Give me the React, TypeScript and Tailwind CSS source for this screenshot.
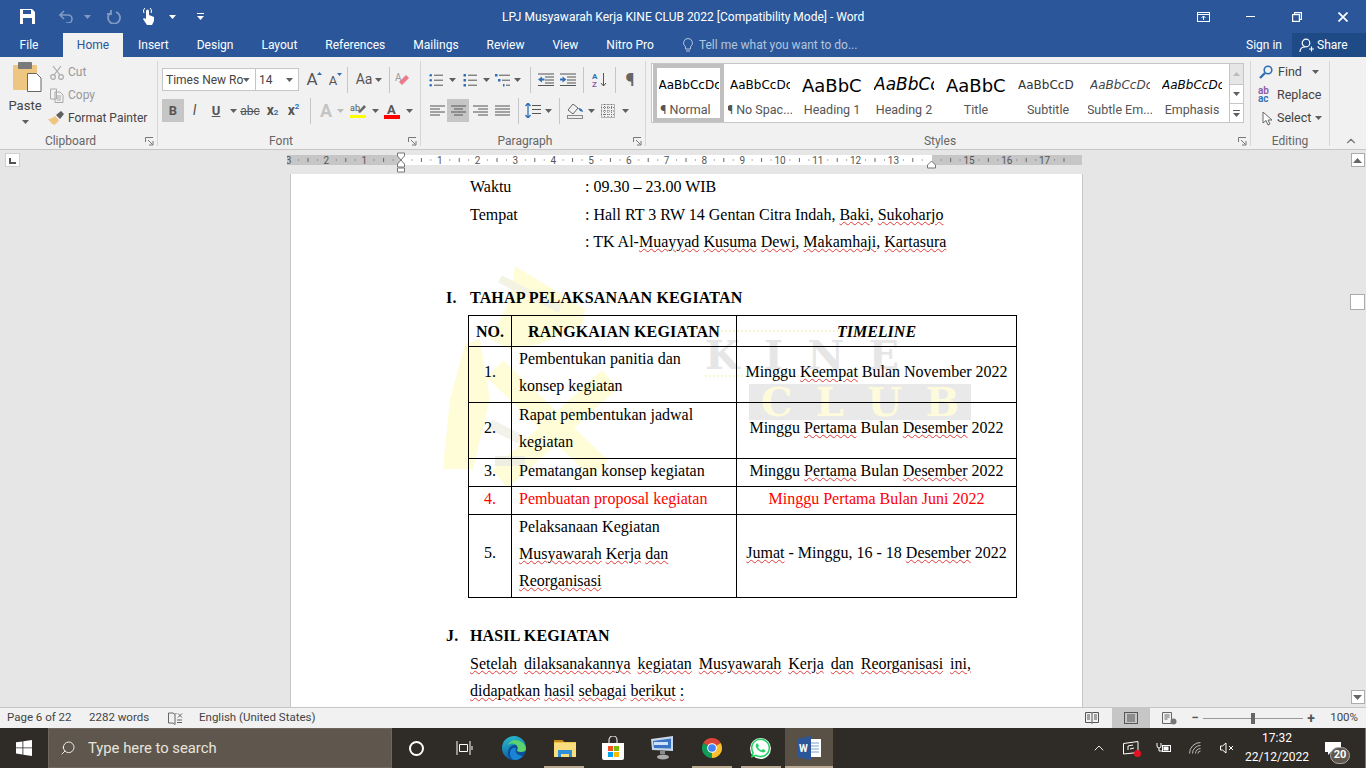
import React from 'react';
import { FaWhatsapp } from 'react-icons/fa';
import { ChevronUp, Search } from 'lucide-react';

const ui = { fontFamily: 'Roboto, "Open Sans", sans-serif' };
const serif = { fontFamily: '"Liberation Serif", "Times New Roman", serif' };
const sample = { fontFamily: '"DejaVu Sans", sans-serif' };
const markFont = { fontFamily: '"DejaVu Serif", serif' };

const Caret: React.FC<{ color?: string }> = ({ color = '#5f5f5f' }) => (
  <svg width="7" height="4" viewBox="0 0 7 4"><path d="M0 0h7L3.5 4z" fill={color} /></svg>
);

const Sep = () => <div className="w-px h-[26px] bg-[#c6c6c6] shrink-0" />;

const Launcher = () => (
  <svg width="9" height="9" viewBox="0 0 9 9" fill="none" stroke="#777">
    <path d="M.5 5V.5H8" /><path d="M3 3l4.5 4.5M8 4v4H4" />
  </svg>
);

// little bars used for list/align icons
const Lines: React.FC<{ rows: [number, number][]; w?: number; h?: number }> = ({ rows, w = 15, h = 12 }) => (
  <svg width={w} height={h} viewBox={`0 0 ${w} ${h}`}>
    {rows.map(([x, l], i) => (
      <rect key={i} x={x} y={i * (h / rows.length) + 0.5} width={l} height="1" fill="#555" />
    ))}
  </svg>
);

const Bullets: React.FC<{ numbered?: boolean }> = ({ numbered }) => (
  <svg width="14" height="14" viewBox="0 0 14 14">
    {[1, 6, 11].map((y) => (
      <React.Fragment key={y}>
        <rect x="0.5" y={y} width="2.5" height="2.5" rx={numbered ? 0.3 : 1.2} fill="#2f6fb5" />
        <rect x="5" y={y + 0.7} width="9" height="1" fill="#555" />
      </React.Fragment>
    ))}
  </svg>
);

const Multi = () => (
  <svg width="15" height="14" viewBox="0 0 15 14">
    <rect x="0" y="1" width="2.5" height="2.5" fill="#2f6fb5" /><rect x="4" y="1.7" width="11" height="1" fill="#555" />
    <rect x="3" y="6" width="2.5" height="2.5" fill="#2f6fb5" /><rect x="7" y="6.7" width="8" height="1" fill="#555" />
    <rect x="8" y="11" width="1.5" height="2.5" fill="#2f6fb5" /><rect x="11" y="11.7" width="4" height="1" fill="#555" />
  </svg>
);

const Indent: React.FC<{ out?: boolean }> = ({ out }) => (
  <svg width="16" height="13" viewBox="0 0 16 13">
    {[0.5, 3.5, 6.5, 9.5, 12].map((y, i) => (
      <rect key={y} x={i === 0 || i === 4 ? 0 : 7} y={y} width={i === 0 || i === 4 ? 16 : 9} height="1" fill="#555" />
    ))}
    <path d={out ? 'M0 6.5 4 3.5v2h2.5v2H4v2z' : 'M6.5 6.5 2.5 3.5v2H0v2h2.5v2z'} fill="#2f6fb5" />
  </svg>
);

const Slot: React.FC<{ className: string; children?: React.ReactNode }> = ({ className, children }) => (
  <div className={`flex items-center justify-center shrink-0 h-full ${className}`}>{children}</div>
);

const GroupLabel: React.FC<{ children: React.ReactNode; launcher?: boolean }> = ({ children, launcher }) => (
  <div className={`relative h-[14px] pt-[4px] flex items-center justify-center text-[#666] text-[12px] ${launcher ? 'pr-[16px]' : ''}`}>
    {children}
    {launcher && (
      <span className="absolute right-[3px] top-[5px] flex"><Launcher /></span>
    )}
  </div>
);

const StyleItem: React.FC<{
  sampleText: string; label: string; sampleClass: string; selected?: boolean;
}> = ({ sampleText, label, sampleClass, selected }) => (
  <div className={`shrink-0 h-full flex flex-col items-center overflow-hidden border-[4px] ${selected ? 'border-[#c0c0c0] w-[71px]' : 'border-transparent w-[72px]'}`}>
    <div className={`h-[34px] w-[60px] shrink-0 overflow-hidden whitespace-nowrap flex items-center ${sampleClass}`} style={sample}>{sampleText}</div>
    <div className={`text-[12.5px] text-[#555] whitespace-nowrap leading-[16px] ${selected ? 'pr-[6px]' : ''}`}>{label}</div>
  </div>
);

const Clipboard = () => (
  <div className="w-[158px] shrink-0 flex flex-col border-r border-[#d6d6d6] mt-[4px] h-[85px]">
    <div className="flex h-[71px] text-[12px] text-[#444]">
      <div className="w-[50px] flex flex-col items-center pt-[1px]">
        <svg width="30" height="30" viewBox="0 0 30 30" className="ml-[4px] shrink-0">
          <rect x="1" y="3" width="24" height="25" rx="1" fill="#eec681" />
          <rect x="6" y="0" width="14" height="7" rx="1" fill="#7a7a7a" />
          <path d="M15.5 11.500h9l4.500 4.500v13.500H15.500z" fill="#fff" stroke="#666" />
        </svg>
        <div className="leading-[16px] mt-[6px] text-[13px]">Paste</div>
        <div className="mt-[6px]"><Caret /></div>
      </div>
      <div className="flex flex-col gap-[3px] pt-[1px]">
        <div className="flex items-center gap-[4px] h-[20px] text-[#999]">
          <svg width="14" height="15" viewBox="0 0 14 15" fill="none" stroke="#aaa" strokeWidth="1.2"><circle cx="3" cy="12" r="2.3" /><circle cx="11" cy="12" r="2.3" /><path d="M4 10 11 1M10 10 3 1" /></svg>
          <span>Cut</span>
        </div>
        <div className="flex items-center gap-[4px] h-[20px] text-[#999]">
          <svg width="14" height="15" viewBox="0 0 14 15" fill="none" stroke="#aaa"><path d="M.5 1h6v10h-6zM5 4h5l3 3v7.5H5zM7 8h4M7 10h4M7 12h4" /></svg>
          <span>Copy</span>
        </div>
        <div className="flex items-center gap-[4px] h-[20px] -ml-[2px]">
          <svg width="16" height="14" viewBox="0 0 16 14"><path d="M0 8c4 0 5-2 7-3l4 4c-1 2-3 4-5 5-2-1-4-3-6-6z" fill="#eec681" /><path d="M8 4l5-4 3 3-4 5z" fill="#5f5f5f" /></svg>
          <span className="whitespace-nowrap">Format Painter</span>
        </div>
      </div>
    </div>
    <GroupLabel launcher>Clipboard</GroupLabel>
  </div>
);

const FontGroup = () => (
  <div className="w-[263px] shrink-0 flex flex-col border-r border-[#d6d6d6] mt-[4px] h-[85px]">
    <div className="h-[71px] flex flex-col pl-[4px] pt-[7px]">
      <div className="h-[23px] flex items-center">
        <div className="w-[94px] h-[23px] bg-white border border-[#c6c6c6] flex items-center justify-between pl-[3px] pr-[5px] text-[12px] text-[#444] shrink-0">
          <span className="whitespace-nowrap">Times New Ro</span><Caret />
        </div>
        <div className="w-[43px] h-[23px] bg-white border border-l-0 border-[#c6c6c6] flex items-center justify-between pl-[3px] pr-[5px] text-[12px] text-[#444] shrink-0">
          <span>14</span><Caret />
        </div>
        <Slot className="w-[20px] ml-[3px] relative text-[17px] text-[#555]">A<span className="absolute right-[0px] top-[4px] flex"><svg width="5" height="3"><path d="M0 3h5L2.5 0z" fill="#2f6fb5" /></svg></span></Slot>
        <Slot className="w-[22px] relative text-[13px] text-[#555] pt-[2px]">A<span className="absolute right-[2px] top-[5px] flex"><svg width="5" height="3"><path d="M0 0h5L2.5 3z" fill="#2f6fb5" /></svg></span></Slot>
        <Slot className="w-[7px]"><Sep /></Slot>
        <Slot className="w-[36px] gap-[3px] text-[14px] text-[#555]">Aa<Caret /></Slot>
        <Slot className="w-[5px]"><Sep /></Slot>
        <Slot className="w-[22px]">
          <svg width="16" height="15" viewBox="0 0 16 15"><path d="M7 13 14 6l-3-3-7 7z" fill="#ec7a8c" /><text x="0" y="9" fontSize="10" fill="#999" style={ui}>A</text></svg>
        </Slot>
      </div>
      <div className="h-[23px] flex items-center mt-[8px] text-[#555]">
        <Slot className="w-[22px] bg-[#c6c6c6] font-bold text-[13px]">B</Slot>
        <Slot className="w-[21px] italic text-[14px]" >I</Slot>
        <Slot className="w-[22px] underline font-bold text-[13px]">U</Slot>
        <Slot className="w-[12px]"><Caret /></Slot>
        <Slot className="w-[22px] line-through text-[12px]">abc</Slot>
        <Slot className="w-[23px] font-bold text-[14px]">x<sub className="text-[8px] text-[#2f6fb5]">2</sub></Slot>
        <Slot className="w-[19px] font-bold text-[14px]">x<sup className="text-[8px] text-[#2f6fb5]">2</sup></Slot>
        <Slot className="w-[14px]"><Sep /></Slot>
        <Slot className="w-[18px] text-[#c4c4c4] text-[18px] font-bold">A</Slot>
        <Slot className="w-[10px]"><Caret color="#bbb" /></Slot>
        <Slot className="w-[26px]">
          <svg width="17" height="15" viewBox="0 0 17 15"><text x="0" y="8" fontSize="9" fill="#555" style={ui}>ab</text><path d="M8 9 14 2l2 2-6 6z" fill="#666" /><rect y="12" width="16" height="3" fill="#ff0" /></svg>
        </Slot>
        <Slot className="w-[9px]"><Caret /></Slot>
        <Slot className="w-[25px]">
          <svg width="17" height="16" viewBox="0 0 17 16"><text x="3" y="11" fontSize="13" fontWeight="700" fill="#555" style={ui}>A</text><rect y="12" width="16" height="4" fill="#f00" /></svg>
        </Slot>
        <Slot className="w-[9px]"><Caret /></Slot>
      </div>
    </div>
    <GroupLabel launcher>Font</GroupLabel>
  </div>
);

const ParagraphGroup = () => (
  <div className="w-[225px] shrink-0 flex flex-col border-r border-[#d6d6d6] mt-[4px] h-[85px]">
    <div className="h-[71px] flex flex-col pl-[7px] pt-[7px]">
      <div className="h-[23px] flex items-center">
        <Slot className="w-[15px]"><Bullets /></Slot>
        <Slot className="w-[18px]"><Caret /></Slot>
        <Slot className="w-[17px]"><Bullets numbered /></Slot>
        <Slot className="w-[16px]"><Caret /></Slot>
        <Slot className="w-[17px]"><Multi /></Slot>
        <Slot className="w-[13px]"><Caret /></Slot>
        <Slot className="w-[12px]"><Sep /></Slot>
        <Slot className="w-[20px]"><Indent out /></Slot>
        <Slot className="w-[23px]"><Indent /></Slot>
        <Slot className="w-[8px]"><Sep /></Slot>
        <Slot className="w-[24px]">
          <svg width="17" height="16" viewBox="0 0 17 16"><text x="1" y="7" fontSize="8" fontWeight="700" fill="#2f6fb5" style={ui}>A</text><text x="1" y="15" fontSize="8" fontWeight="700" fill="#8a5aa8" style={ui}>Z</text><path d="M12.5 1v13M10 11l2.5 3 2.5-3" stroke="#555" fill="none" /></svg>
        </Slot>
        <Slot className="w-[8px]"><Sep /></Slot>
        <Slot className="w-[22px] text-[18px] font-bold text-[#666]">¶</Slot>
      </div>
      <div className="h-[23px] flex items-center mt-[8px]">
        <Slot className="w-[19px]"><Lines rows={[[0, 15], [0, 10], [0, 15], [0, 10]]} /></Slot>
        <Slot className="w-[22px] bg-[#c6c6c6]"><Lines rows={[[0, 15], [3, 9], [0, 15], [3, 9]]} /></Slot>
        <Slot className="w-[22px]"><Lines rows={[[0, 15], [5, 10], [0, 15], [5, 10]]} /></Slot>
        <Slot className="w-[22px]"><Lines rows={[[0, 15], [0, 15], [0, 15], [0, 15]]} /></Slot>
        <Slot className="w-[10px]"><Sep /></Slot>
        <Slot className="w-[19px]">
          <svg width="16" height="15" viewBox="0 0 16 15"><path d="M3 0v15M0.5 3 3 0l2.5 3M.5 12 3 15l2.5-3" stroke="#2f6fb5" fill="none" strokeWidth="1.3" /><rect x="7" y="2" width="9" height="1" fill="#555" /><rect x="7" y="6" width="9" height="1" fill="#555" /><rect x="7" y="10" width="9" height="1" fill="#555" /></svg>
        </Slot>
        <Slot className="w-[12px]"><Caret /></Slot>
        <Slot className="w-[10px]"><Sep /></Slot>
        <Slot className="w-[22px]">
          <svg width="17" height="16" viewBox="0 0 17 16" fill="none"><path d="M6 1 1 7l5 4 5-6z" stroke="#666" /><path d="M11 5c3 0 5 2 5 4l-3-1z" fill="#2f6fb5" /><rect x="0.5" y="12.5" width="15" height="3" stroke="#888" fill="#eee" /></svg>
        </Slot>
        <Slot className="w-[10px]"><Caret /></Slot>
        <Slot className="w-[24px]">
          <svg width="14" height="14" viewBox="0 0 14 14" fill="none" stroke="#777" strokeDasharray="1 1"><rect x="0.5" y="0.5" width="13" height="13" /><path d="M7 0v14M0 7h14M3.5 0v14M10.5 0v14M0 3.5h14M0 10.5h14" /></svg>
        </Slot>
        <Slot className="w-[10px]"><Caret /></Slot>
      </div>
    </div>
    <GroupLabel launcher>Paragraph</GroupLabel>
  </div>
);

const StylesGroup = () => (
  <div className="w-[605px] shrink-0 flex flex-col border-r border-[#d6d6d6] mt-[4px] h-[85px]">
    <div className="h-[71px] pl-[5px] pt-[2px]">
      <div className="w-[593px] h-[60px] border border-[#c6c6c6] bg-white flex pl-[1px]">
        <StyleItem selected sampleText="AaBbCcDc" label="¶ Normal" sampleClass="text-[12px] text-black" />
        <StyleItem sampleText="AaBbCcDc" label="¶ No Spac..." sampleClass="text-[12px] text-black" />
        <StyleItem sampleText="AaBbC" label="Heading 1" sampleClass="text-[18px] text-black" />
        <StyleItem sampleText="AaBbCc" label="Heading 2" sampleClass="text-[17px] text-black italic" />
        <StyleItem sampleText="AaBbC" label="Title" sampleClass="text-[18px] text-black" />
        <StyleItem sampleText="AaBbCcD" label="Subtitle" sampleClass="text-[12px] text-[#333]" />
        <StyleItem sampleText="AaBbCcDc" label="Subtle Em..." sampleClass="text-[12px] text-[#444] italic" />
        <StyleItem sampleText="AaBbCcDc" label="Emphasis" sampleClass="text-[12px] text-black italic" />
        <div className="ml-auto w-[14px] border-l border-[#c6c6c6] flex flex-col shrink-0">
          <div className="h-[21px] bg-[#e6e6e6] border-b border-[#c6c6c6] flex items-center justify-center">
            <svg width="7" height="4"><path d="M0 4h7L3.5 0z" fill="#bbb" /></svg>
          </div>
          <div className="h-[19px] border-b border-[#c6c6c6] flex items-center justify-center"><Caret /></div>
          <div className="flex-1 flex flex-col items-center justify-center gap-[2px]">
            <div className="w-[7px] h-px bg-[#5f5f5f]" /><Caret />
          </div>
        </div>
      </div>
    </div>
    <GroupLabel launcher>Styles</GroupLabel>
  </div>
);

const EditingGroup = () => (
  <div className="w-[79px] shrink-0 flex flex-col border-r border-[#d6d6d6] mt-[4px] h-[85px]">
    <div className="h-[71px] flex flex-col gap-[3px] pl-[8px] pt-[1px] text-[12.5px] text-[#444]">
      <div className="h-[20px] flex items-center gap-[5px]">
        <svg width="14" height="14" viewBox="0 0 14 14" fill="none" stroke="#2f6fb5" strokeWidth="1.6"><circle cx="9" cy="5" r="3.8" /><path d="M6 8 1 13" strokeWidth="2.4" /></svg>
        <span>Find</span><span className="ml-[5px] flex"><Caret /></span>
      </div>
      <div className="h-[20px] flex items-center gap-[3px] -ml-[1px]">
        <div className="w-[16px] text-[10px] leading-[8px] font-semibold">
          <div className="text-[#8a5aa8]">ab</div><div className="text-[#2f6fb5]">ac</div>
        </div>
        <span>Replace</span>
      </div>
      <div className="h-[20px] flex items-center gap-[4px] pl-[3px]">
        <svg width="11" height="15" viewBox="0 0 11 15" fill="#fff" stroke="#666"><path d="M1 1v11l3-2.5L6 14l2-1-2-4h4z" /></svg>
        <span>Select</span><Caret />
      </div>
    </div>
    <GroupLabel>Editing</GroupLabel>
  </div>
);

const Ribbon = () => (
  <div className="h-[93px] bg-[#f1f1f1] border-b border-[#c6c6c6] flex shrink-0 relative">
    <Clipboard />
    <FontGroup />
    <ParagraphGroup />
    <StylesGroup />
    <EditingGroup />
    <span className="absolute right-[8px] bottom-[1px] flex text-[#777]"><ChevronUp size={14} /></span>
  </div>
);

const ticks = Array.from({ length: 85 }, (_, i) => i - 14);
const Ruler = () => (
  <svg width="800" height="24" viewBox="0 0 800 24" className="shrink-0">
    <rect x="0" y="5" width="795" height="10" fill="#c6c6c6" />
    <rect x="114" y="5" width="531" height="10" fill="#fff" />
    {ticks.map((t) => {
      const x = 115 + t * 9.45;
      if (x > 790) return null;
      const q = ((t % 4) + 4) % 4;
      if (q === 0) {
        const n = Math.abs(t / 4);
        if (n === 0 || n === 14) return null;
        return <text key={t} x={x} y="13.5" textAnchor="middle" fontSize="10" fill="#555" style={ui}>{n}</text>;
      }
      return q === 2
        ? <rect key={t} x={x} y="8" width="1" height="4" fill="#666" />
        : <rect key={t} x={x} y="9.5" width="1" height="1" fill="#666" />;
    })}
    <path d="M110.5 3h7v3l-3.5 4-3.5-4zM110.5 17v-3l3.5-4 3.5 4v3zM110.5 18h7v4h-7z" fill="#fff" stroke="#777" />
    <path d="M640.5 18v-3l4-4 4 4v3z" fill="#fff" stroke="#777" />
  </svg>
);

const Sq: React.FC<{ children: React.ReactNode }> = ({ children }) => (
  <span className="underline decoration-wavy decoration-[#e23b3b] decoration-1 underline-offset-1">{children}</span>
);

const Watermark = () => (
  <div className="absolute left-[152px] top-[90px] w-[540px] h-[225px] pointer-events-none overflow-hidden">
    <svg width="220" height="225" viewBox="443 265 220 225" className="absolute left-0 top-0">
      <path d="M465 345 480 340 490 400 473 470H443L450 400z" fill="#fffdd8" />
      <path d="M515 267 585 310 583 325 540 345 510 350 490 340 510 300z" fill="#fffdd8" />
      <path d="M495 370 600 470M610 380 500 480" stroke="#fffdd8" strokeWidth="24" fill="none" />
      <path d="M500 280 560 310" stroke="#f4f2e2" strokeWidth="8" fill="none" />
      <path d="M490 425 520 440" stroke="#f2f2ea" strokeWidth="10" fill="none" />
      <path d="M495 462h30" stroke="#efeee2" strokeWidth="10" fill="none" />
    </svg>
    <div className="absolute left-[262px] top-[66px] w-[194px] h-[3px] border-t-2 border-dotted border-[#faf6d0]" />
    <div className="absolute left-[262px] top-[72px] w-[194px] flex justify-between text-[40px] leading-[38px] font-bold text-[#e6e6e6]" style={markFont}>
      <span>K</span><span>I</span><span>N</span><span>E</span>
    </div>
    <div className="absolute left-[262px] top-[111px] w-[194px] h-[3px] border-t-2 border-dotted border-[#faf6d0]" />
    <div className="absolute left-[306px] top-[120px] w-[222px] h-[36px] bg-[#e9e9e9] text-[#fdfbdc] text-[40px] leading-[36px] font-bold flex justify-around overflow-hidden" style={markFont}>
      <span>C</span><span>L</span><span>U</span><span>B</span>
    </div>
  </div>
);

const cell = 'border border-black text-center align-middle';
const tall = `${cell} pb-[7px]`;
const short = `${cell} pb-[3px] leading-[24px]`;
const textCell = 'border border-black px-[7px] align-top';
const shortText = 'border border-black px-[7px] pb-[3px] leading-[24px]';

const Page = () => (
  <div className="w-[793px] shrink-0 bg-white border-x border-[#c6c6c6] relative overflow-hidden text-[16px] text-black leading-[27.5px]" style={serif}>
    <Watermark />
    <div className="relative pl-[179px] pr-[112px] -mt-[1px]">
      <div className="flex h-[28px]"><span className="w-[115px]">Waktu</span><span>: 09.30 – 23.00 WIB</span></div>
      <div className="flex h-[27px]"><span className="w-[115px]">Tempat</span><span>: Hall RT 3 RW 14 Gentan Citra Indah, <Sq>Baki</Sq>, <Sq>Sukoharjo</Sq></span></div>
      <div className="flex h-[27px]"><span className="w-[115px]" /><span>: TK Al-<Sq>Muayyad</Sq> <Sq>Kusuma</Sq> <Sq>Dewi</Sq>, <Sq>Makamhaji</Sq>, <Sq>Kartasura</Sq></span></div>
      <div className="h-[29px]" />
      <div className="font-bold -ml-[24px] flex h-[27px] tracking-[0.15px]"><span className="w-[24px]">I.</span>TAHAP PELAKSANAAN KEGIATAN</div>
      <table className="border-collapse table-fixed w-[548px] mt-[4px] -ml-[2px] leading-[27px]">
        <colgroup><col className="w-[43px]" /><col className="w-[225px]" /><col className="w-[280px]" /></colgroup>
        <tbody>
          <tr className="h-[31px]">
            <td className={`${cell} font-bold`}>NO.</td>
            <td className={`${cell} font-bold tracking-[0.15px]`}>RANGKAIAN KEGIATAN</td>
            <td className={`${cell} font-bold italic`}>TIMELINE</td>
          </tr>
          <tr className="h-[56px]">
            <td className={tall}>1.</td>
            <td className={textCell}><div className="-mt-[2px]">Pembentukan panitia dan<br />konsep kegiatan</div></td>
            <td className={tall}>Minggu <Sq>Keempat</Sq> Bulan November 2022</td>
          </tr>
          <tr className="h-[56px]">
            <td className={tall}>2.</td>
            <td className={textCell}><div className="-mt-[2px]">Rapat pembentukan jadwal<br />kegiatan</div></td>
            <td className={tall}>Minggu <Sq>Pertama</Sq> Bulan <Sq>Desember</Sq> 2022</td>
          </tr>
          <tr className="h-[28px]">
            <td className={short}>3.</td>
            <td className={shortText}>Pematangan konsep kegiatan</td>
            <td className={short}>Minggu <Sq>Pertama</Sq> Bulan <Sq>Desember</Sq> 2022</td>
          </tr>
          <tr className="h-[28px] text-[#f00]">
            <td className={short}>4.</td>
            <td className={shortText}>Pembuatan proposal kegiatan</td>
            <td className={short}>Minggu Pertama Bulan Juni 2022</td>
          </tr>
          <tr className="h-[83px]">
            <td className={tall}>5.</td>
            <td className={textCell}><div className="-mt-[2px]">Pelaksanaan Kegiatan<br /><Sq>Musyawarah</Sq> <Sq>Kerja</Sq> <Sq>dan</Sq><br /><Sq>Reorganisasi</Sq></div></td>
            <td className={tall}><Sq>Jumat</Sq> - Minggu, 16 - 18 <Sq>Desember</Sq> 2022</td>
          </tr>
        </tbody>
      </table>
      <div className="h-[24px]" />
      <div className="font-bold -ml-[24px] flex h-[28px] tracking-[0.15px]"><span className="w-[24px]">J.</span>HASIL KEGIATAN</div>
      <div className="flex justify-between w-[501px] h-[27px]">
        <Sq>Setelah</Sq><Sq>dilaksanakannya</Sq><Sq>kegiatan</Sq><Sq>Musyawarah</Sq><Sq>Kerja</Sq><Sq>dan</Sq><Sq>Reorganisasi</Sq><Sq>ini,</Sq>
      </div>
      <div className="whitespace-nowrap"><Sq>didapatkan</Sq> <Sq>hasil</Sq> <Sq>sebagai</Sq> <Sq>berikut</Sq> <Sq>:</Sq></div>
    </div>
  </div>
);

const Scrollbar = () => (
  <div className="w-[17px] shrink-0 flex flex-col items-center pt-[3px] pb-[3px] bg-[#e6e6e6]">
    <div className="w-[14px] h-[14px] bg-white border border-[#ababab] flex items-center justify-center">
      <svg width="9" height="5"><path d="M0 5h9L4.5 0z" fill="#666" /></svg>
    </div>
    <div className="flex-1 w-full relative">
      <div className="absolute left-[1px] top-[127px] w-[15px] h-[16px] bg-white border border-[#ababab]" />
    </div>
    <div className="w-[14px] h-[14px] bg-white border border-[#ababab] flex items-center justify-center">
      <svg width="9" height="5"><path d="M0 0h9L4.5 5z" fill="#666" /></svg>
    </div>
  </div>
);

const DocArea = () => (
  <div className="flex-1 min-h-0 flex bg-[#e6e6e6]">
    <div className="flex-1 min-w-0 flex flex-col overflow-hidden">
      <div className="h-[24px] flex shrink-0">
        <div className="w-[287px] shrink-0 pl-[5px] pt-[3px]">
          <div className="w-[15px] h-[14px] bg-white border border-[#d0d0d0] flex items-end justify-center pb-[2px]">
            <svg width="7" height="6"><path d="M0 0h2v4h5v2H0z" fill="#555" /></svg>
          </div>
        </div>
        <Ruler />
      </div>
      <div className="flex-1 min-h-0 flex pl-[290px]">
        <Page />
      </div>
    </div>
    <Scrollbar />
  </div>
);

const StatusBar = () => (
  <div className="h-[21px] bg-[#f1f1f1] border-t border-[#c6c6c6] flex items-center text-[11.5px] text-[#444] shrink-0">
    <span className="pl-[7px] w-[89px] whitespace-nowrap">Page 6 of 22</span>
    <span className="w-[79px] whitespace-nowrap">2282 words</span>
    <svg width="15" height="13" viewBox="0 0 15 13" fill="none" stroke="#666" className="shrink-0"><path d="M.5 1h4.5L7 2.5v10L5 11H.5zM7 2.5 8.5 1" /><path d="M10 1.5l4 4M14 1.5l-4 4M9 8h5M9 10.5h5" /></svg>
    <span className="ml-[16px] whitespace-nowrap">English (United States)</span>
    <div className="ml-auto flex items-center h-full">
      <Slot className="w-[26px]">
        <svg width="14" height="12" viewBox="0 0 14 12" fill="none" stroke="#555"><path d="M.5.5h6l.5 1 .5-1h6v10h-6l-.5 1-.5-1h-6zM7 1.5v9M2 3h3M2 5h3M2 7h3M9 3h3M9 5h3M9 7h3" /></svg>
      </Slot>
      <Slot className="w-[38px] ml-[7px] bg-[#c6c6c6]">
        <svg width="14" height="12" viewBox="0 0 14 12" fill="none" stroke="#555"><rect x=".5" y=".5" width="13" height="11" /><path d="M3 3h8M3 5h8M3 7h8M3 9h8" /></svg>
      </Slot>
      <Slot className="w-[38px]">
        <svg width="15" height="13" viewBox="0 0 15 13" fill="none" stroke="#666"><path d="M.5.5h9v11h-9zM2.5 3h5M2.5 5h5M2.5 7h3" /><circle cx="11.5" cy="9.5" r="3" fill="#777" stroke="none" /></svg>
      </Slot>
      <Slot className="w-[14px] text-[#555] font-bold text-[13px]">−</Slot>
      <div className="w-[100px] h-full relative flex items-center shrink-0 ml-[1px]">
        <div className="w-full h-px bg-[#999]" />
        <div className="absolute left-[48px] top-[5px] w-[4px] h-[11px] bg-[#666]" />
      </div>
      <Slot className="w-[16px] text-[#555] font-bold text-[14px]">+</Slot>
      <span className="w-[47px] text-right pr-[8px] text-[11.5px]">100%</span>
    </div>
  </div>
);

const Chrome = () => (
  <svg width="22" height="22" viewBox="0 0 24 24">
    <path d="M12 12 2.5 6.5A11 11 0 0 1 21.5 6.5z" fill="#db4437" />
    <path d="M12 12 2.5 6.5A11 11 0 0 0 12 23z" fill="#0f9d58" />
    <path d="M12 12 21.5 6.5A11 11 0 0 1 12 23z" fill="#fbc02d" />
    <circle cx="12" cy="12" r="5.3" fill="#fff" /><circle cx="12" cy="12" r="4.2" fill="#4285f4" />
  </svg>
);

const Edge = () => (
  <svg width="24" height="24" viewBox="0 0 24 24">
    <defs>
      <linearGradient id="edgeA" x1="0" y1="0" x2="0.3" y2="1"><stop offset="0" stopColor="#2bc3d2" /><stop offset="1" stopColor="#0c59a4" /></linearGradient>
    </defs>
    <circle cx="12" cy="12" r="12" fill="url(#edgeA)" />
    <path d="M6 17c0-5 3-8 7-8 3 0 5 1 6 4h5c0 6-5 11-11 11-4 0-7-3-7-7z" fill="#0c4f96" />
    <path d="M13 4c5 0 11 3 11 9 0 2-2 3-5 3s-4-1-4-2c1-1 1-2 0-4-2-3-6-3-9-1 1-3 4-5 7-5z" fill="#5bd36e" />
    <path d="M8 17c0-4 3-6 6-5-1 3 0 6 3 7 2 1 3 1 4 1-2 2-5 4-8 4-3 0-5-3-5-7z" fill="#1a85d6" />
  </svg>
);

const Taskbar = () => (
  <div className="h-[40px] bg-[#2f2b26] flex items-center shrink-0 text-white">
    <Slot className="w-[48px]">
      <svg width="16" height="16" viewBox="0 0 16 16" fill="#fff"><path d="M0 2.3 6.5 1.400v6.100H0zM7.300 1.300 16 0v7.500H7.300zM0 8.300h6.500v6.200L0 13.600zM7.300 8.300H16V16l-8.700-1.300z" /></svg>
    </Slot>
    <div className="w-[344px] h-full bg-[#5f574d] border border-[#6f675d] flex items-center text-[#e8e4de] text-[14.8px] shrink-0">
      <Search size={16} strokeWidth={1.3} className="ml-[11px] -scale-x-100 text-white" />
      <span className="ml-[12px] whitespace-nowrap">Type here to search</span>
    </div>
    <Slot className="w-[48px]"><div className="w-[15px] h-[15px] rounded-full border-[2.5px] border-white" /></Slot>
    <Slot className="w-[48px]">
      <svg width="17" height="14" viewBox="0 0 17 14" fill="none" stroke="#fff"><path d="M3.500 3.500h8v7h-8zM1 0v14M14 0v14M16 5v4" /></svg>
    </Slot>
    <Slot className="w-[52px]"><Edge /></Slot>
    <Slot className="w-[49px] relative">
      <svg width="22" height="18" viewBox="0 0 22 18"><path d="M0 1h8l2 2h12v15H0z" fill="#f2c84b" /><path d="M0 1h8l2 2H0z" fill="#c78e1b" /><rect x="0" y="4" width="22" height="14" fill="#fadd7d" /><path d="M4 18v-7h14v7h-3v-3H7v3z" fill="#2f8fd8" /></svg>
      <span className="absolute left-[4px] right-[5px] bottom-0 h-[2px] bg-[#b9a892]" />
    </Slot>
    <Slot className="w-[48px]">
      <svg width="24" height="24" viewBox="0 0 24 24"><path d="M1 7h22v15a2 2 0 0 1-2 2H3a2 2 0 0 1-2-2z" fill="#fff" /><path d="M8 7V4a4 4 0 0 1 8 0v3" fill="none" stroke="#ddd" strokeWidth="1.2" /><rect x="7" y="10" width="5" height="5" fill="#f25022" /><rect x="13" y="10" width="5" height="5" fill="#7fba00" /><rect x="7" y="16" width="5" height="5" fill="#00a4ef" /><rect x="13" y="16" width="5" height="5" fill="#ffb900" /></svg>
    </Slot>
    <Slot className="w-[50px]">
      <svg width="24" height="24" viewBox="0 0 24 24"><path d="M1 3 23 0v15L2 14z" fill="#c7d7ea" /><path d="M3 5 21 2.500v10L4 12z" fill="#3a74c4" /><path d="M4 6h14v3H4z" fill="#cfe2f7" /><path d="M10 15h5v3h-5z" fill="#8a8a8a" /><ellipse cx="13" cy="21" rx="6" ry="2.500" fill="#aaa" /></svg>
    </Slot>
    <Slot className="w-[49px] relative"><Chrome /><span className="absolute left-[5px] right-[4px] bottom-0 h-[2px] bg-[#b9a892]" /></Slot>
    <Slot className="w-[49px] relative">
      <span className="w-[21px] h-[21px] rounded-full bg-white flex items-center justify-center"><FaWhatsapp size={22} className="text-[#25d366]" /></span>
      <span className="absolute left-[5px] right-[4px] bottom-0 h-[2px] bg-[#b9a892]" />
    </Slot>
    <Slot className="w-[48px] bg-[#5a5146] relative">
      <svg width="26" height="24" viewBox="0 0 26 24"><rect x="11" y="3" width="14" height="18" fill="#fff" /><path d="M14 7h9M14 10h9M14 13h9M14 16h9" stroke="#7aa0d4" /><path d="M1 3 15 0v24L1 21z" fill="#2b579a" /><text x="3" y="16" fontSize="10" fontWeight="700" fill="#fff" style={ui}>W</text></svg>
      <span className="absolute left-0 right-0 bottom-0 h-[2px] bg-[#b9a892]" />
    </Slot>
    <div className="ml-auto flex items-center h-full">
      <Slot className="w-[32px]"><ChevronUp size={16} strokeWidth={1.4} /></Slot>
      <Slot className="w-[32px] relative">
        <svg width="16" height="15" viewBox="0 0 16 15" fill="none" stroke="#fff"><path d="M.5 2.500 15 .5v11L.5 13zM5 9V5l5-1M7 8l4-1" /></svg>
        <span className="absolute left-[19px] top-[22px] w-[7px] h-[7px] rounded-full bg-[#e81123]" />
      </Slot>
      <Slot className="w-[33px]">
        <svg width="16" height="12" viewBox="0 0 16 12" fill="none" stroke="#fff"><path d="M1 1v3a2 2 0 0 0 4 0V1M3 6v3h3" /><rect x="6.500" y="3.500" width="8" height="6" /><rect x="8" y="5" width="4" height="3" fill="#fff" /></svg>
      </Slot>
      <Slot className="w-[32px]">
        <svg width="14" height="12" viewBox="0 0 14 12" fill="none" stroke="#bbb"><path d="M.5 11.500a11 11 0 0 1 11-11M3.500 11.500a8 8 0 0 1 8-8M6.500 11.500a5 5 0 0 1 5-5M9 11.500a2.500 2.500 0 0 1 2.500-2.500" /></svg>
      </Slot>
      <Slot className="w-[30px]">
        <svg width="15" height="12" viewBox="0 0 15 12" fill="none" stroke="#fff"><path d="M.5 4h2L6 1v10L2.500 8h-2zM9 4l4 4M13 4l-4 4" /></svg>
      </Slot>
      <div className="w-[70px] text-center text-[12px] leading-[19px] shrink-0">
        <div>17:32</div><div>22/12/2022</div>
      </div>
      <Slot className="w-[50px] relative pr-[8px]">
        <svg width="16" height="13" viewBox="0 0 16 13" fill="#fff"><path d="M0 0h16v10H6l-3 3v-3H0z" /></svg>
        <span className="absolute left-[18px] top-[19px] w-[20px] h-[17px] rounded-full bg-[#5f574d] border border-[#aaa] text-[11px] font-bold flex items-center justify-center">20</span>
      </Slot>
      <div className="w-[4px] h-full border-r border-[#777] shrink-0" />
    </div>
  </div>
);

const App: React.FC = () => {
  return (
    <div className="w-[1366px] h-[768px] flex flex-col overflow-hidden bg-[#f1f1f1]" style={ui}>
      {/* title bar */}
      <div className="h-[33px] bg-[#2b579a] flex items-center text-white shrink-0">
        <Slot className="w-[54px]">
          <svg width="15" height="15" viewBox="0 0 15 15" fill="#fff"><path d="M0 0h12l3 3v12H0z" /><rect x="3" y="1" width="8" height="4" fill="#2b579a" /><rect x="3" y="9" width="9" height="6" fill="#2b579a" /></svg>
        </Slot>
        <Slot className="w-[24px] opacity-40">
          <svg width="15" height="13" viewBox="0 0 15 13" fill="none" stroke="#fff" strokeWidth="1.6"><path d="M5 1 1 5l4 4M1 5h8a4 4 0 0 1 0 8H7" /></svg>
        </Slot>
        <Slot className="w-[18px] opacity-40"><Caret color="#fff" /></Slot>
        <Slot className="w-[36px] opacity-40">
          <svg width="14" height="14" viewBox="0 0 14 14" fill="none" stroke="#fff" strokeWidth="1.8"><path d="M9 2a6 6 0 1 1-5 .5M4 0v4H0" /></svg>
        </Slot>
        <Slot className="w-[34px]">
          <svg width="14" height="17" viewBox="0 0 14 17" fill="#fff"><path d="M4 8V3a1.500 1.500 0 0 1 3 0v4l5 2v4l-2 4H5L1 11l1-1 2 1z" /><path d="M2 5a4 4 0 1 1 7 0" fill="none" stroke="#fff" /></svg>
        </Slot>
        <Slot className="w-[12px]"><Caret color="#fff" /></Slot>
        <Slot className="w-[45px]">
          <svg width="7" height="7" viewBox="0 0 7 7" fill="#fff"><rect y="0" width="7" height="1" /><path d="M0 3h7L3.500 7z" /></svg>
        </Slot>
        <div className="ml-[279px] text-[12px] whitespace-nowrap">LPJ Musyawarah Kerja KINE CLUB 2022 [Compatibility Mode] - Word</div>
        <div className="ml-auto flex items-center h-full">
          <Slot className="w-[47px]">
            <svg width="13" height="10" viewBox="0 0 13 10" fill="none" stroke="#fff"><rect x=".5" y=".5" width="12" height="9" /><path d="M.5 2.500h12M6.500 8V4M4.500 6l2-2 2 2" /></svg>
          </Slot>
          <Slot className="w-[47px]"><div className="w-[9px] h-[1.5px] bg-white" /></Slot>
          <Slot className="w-[46px]">
            <svg width="10" height="10" viewBox="0 0 10 10" fill="none" stroke="#fff" strokeWidth="1.2"><rect x=".6" y="2.600" width="6.800" height="6.800" /><path d="M2.600 2.500V.6h6.800v6.800H7.500" /></svg>
          </Slot>
          <Slot className="w-[46px]">
            <svg width="10" height="10" viewBox="0 0 10 10" stroke="#fff" strokeWidth="1.700"><path d="M.5.5l9 9M9.500.5l-9 9" /></svg>
          </Slot>
        </div>
      </div>
      {/* tabs */}
      <div className="h-[24px] bg-[#2b579a] flex items-stretch text-white text-[12px] shrink-0">
        <div className="w-[63px] flex items-center justify-center pr-[5px]">File</div>
        <div className="w-[60px] bg-[#f1f1f1] text-[#2b579a] flex items-center justify-center">Home</div>
        <div className="ml-[15px] flex items-center gap-[28px] whitespace-nowrap">
          <span>Insert</span><span>Design</span><span>Layout</span><span>References</span><span>Mailings</span><span>Review</span><span>View</span><span>Nitro Pro</span>
        </div>
        <div className="ml-[29px] flex items-center gap-[6px] text-[#b3c5de] whitespace-nowrap">
          <svg width="10" height="14" viewBox="0 0 10 14" fill="none" stroke="#b3c5de"><path d="M5 .5a4.500 4.500 0 0 0-2.500 8.200V11h5V8.700A4.500 4.500 0 0 0 5 .5zM3 13h4" /></svg>
          <span>Tell me what you want to do...</span>
        </div>
        <div className="ml-auto flex items-center">
          <span className="mr-[10px]">Sign in</span>
          <div className="w-[74px] h-full bg-[#1e4a86] flex items-center pl-[7px] gap-[3px]">
            <svg width="15" height="15" viewBox="0 0 15 15" fill="none" stroke="#fff" strokeWidth="1.200"><circle cx="7" cy="5" r="3.800" /><path d="M1 14c0-3 2-5 5-5M10 11h5M12.500 8.500v5" /></svg>
            <span>Share</span>
          </div>
        </div>
      </div>
      <Ribbon />
      <DocArea />
      <StatusBar />
      <Taskbar />
    </div>
  );
};

export default App;
